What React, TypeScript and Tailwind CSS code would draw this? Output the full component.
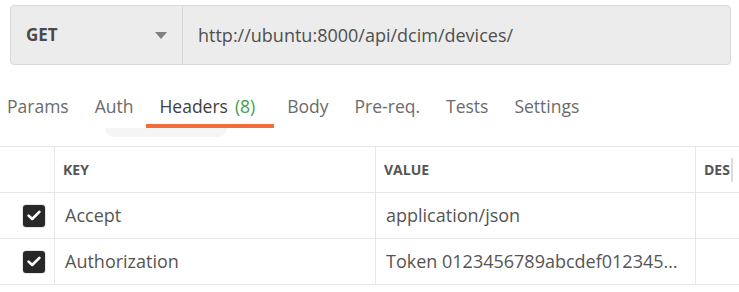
import React from "react";

function Check() {
  return (
    <div className="w-[24px] h-[24px] rounded-[4px] bg-[#e8e8e8] flex items-center justify-center">
      <div className="w-[22px] h-[22px] rounded-[3px] bg-[#282828] flex items-center justify-center">
        <svg width="14" height="11" viewBox="0 0 14 11" fill="none">
          <path d="M1.6 5.6 L5.2 9 L12.4 1.8" stroke="#ffffff" strokeWidth="2.6" strokeLinecap="round" strokeLinejoin="round" />
        </svg>
      </div>
    </div>
  );
}

export default function App() {
  const tabs = ["Params", "Auth", "Headers", "Body", "Pre-req.", "Tests", "Settings"];
  return (
    <div className="relative w-[739px] h-[292px] overflow-hidden bg-white font-['Open_Sans',sans-serif] text-[#505050]">
      <div className="pt-[5px] pl-[10px]">
        <div className="w-[721px] h-[60px] flex border border-[#dadada] rounded-[4px] bg-[#ececec]">
          <div className="w-[172px] flex items-center justify-between pl-[15px] pr-[15px] border-r border-[#d8d8d8]">
            <span className="text-[17px] font-bold text-[#4a4a4a]">GET</span>
            <svg width="12" height="7" viewBox="0 0 12 7">
              <path d="M0 0 L12 0 L6 7 Z" fill="#808080" />
            </svg>
          </div>
          <div className="flex-1 flex items-center pl-[15px] text-[18px] text-[#4f4f4f]">
            http://ubuntu:8000/api/dcim/devices/
          </div>
        </div>
      </div>

      <div className="relative mt-[19px] h-[44px] flex ml-[-6px]">
        {tabs.map((t) => (
          <div
            key={t}
            className={
              "relative h-[44px] flex items-center px-[13px] text-[17.5px] " +
              (t === "Headers" ? "text-[#404040]" : "text-[#6b6b6b]")
            }
          >
            {t === "Headers" ? (
              <>
                <span>Headers</span>
                <span className="ml-[7px] text-[#3e9f4a]">(8)</span>
                <span className="ml-[6px]" />
                <div className="absolute left-0 right-0 bottom-0 h-[4px] bg-[#f26b3a]" />
              </>
            ) : (
              <span>{t}</span>
            )}
          </div>
        ))}
      </div>
      <div className="absolute left-[105px] top-[128px] w-[122px] h-[9px] rounded-b-[9px] bg-[#f5f5f5]" />

      <div className="mt-[18px] border-t border-[#e6e6e6] w-[900px]">
        <div className="grid grid-cols-[55px_321px_320px_204px] h-[46px] border-b border-[#e6e6e6]">
          <div className="border-r border-[#e6e6e6]" />
          <div className="border-r border-[#e6e6e6] flex items-center pl-[8px] text-[14px] font-bold text-[#555]">KEY</div>
          <div className="border-r border-[#e6e6e6] flex items-center pl-[8px] text-[14px] font-bold text-[#555]">VALUE</div>
          <div className="flex items-center pl-[8px] text-[14px] font-bold text-[#555]">
            <span>DES</span>
            <span className="ml-[1px] w-[2px] h-[24px] bg-[#dcdcdc]" />
          </div>
        </div>
        {[
          ["Accept", "application/json"],
          ["Authorization", "Token 0123456789abcdef0123456789abcdef01234567"],
        ].map(([k, v]) => (
          <div key={k} className="grid grid-cols-[55px_321px_320px_204px] h-[46px] border-b border-[#e6e6e6]">
            <div className="border-r border-[#e6e6e6] flex items-center justify-end pr-[8px]">
              <Check />
            </div>
            <div className="border-r border-[#e6e6e6] flex items-center pl-[10px] text-[18px] text-[#555]">{k}</div>
            <div className="border-r border-[#e6e6e6] flex items-center pl-[10px] pr-[11px] text-[18px] text-[#555] min-w-0">
              <span className="block truncate">{v}</span>
            </div>
            <div />
          </div>
        ))}
      </div>
    </div>
  );
}
